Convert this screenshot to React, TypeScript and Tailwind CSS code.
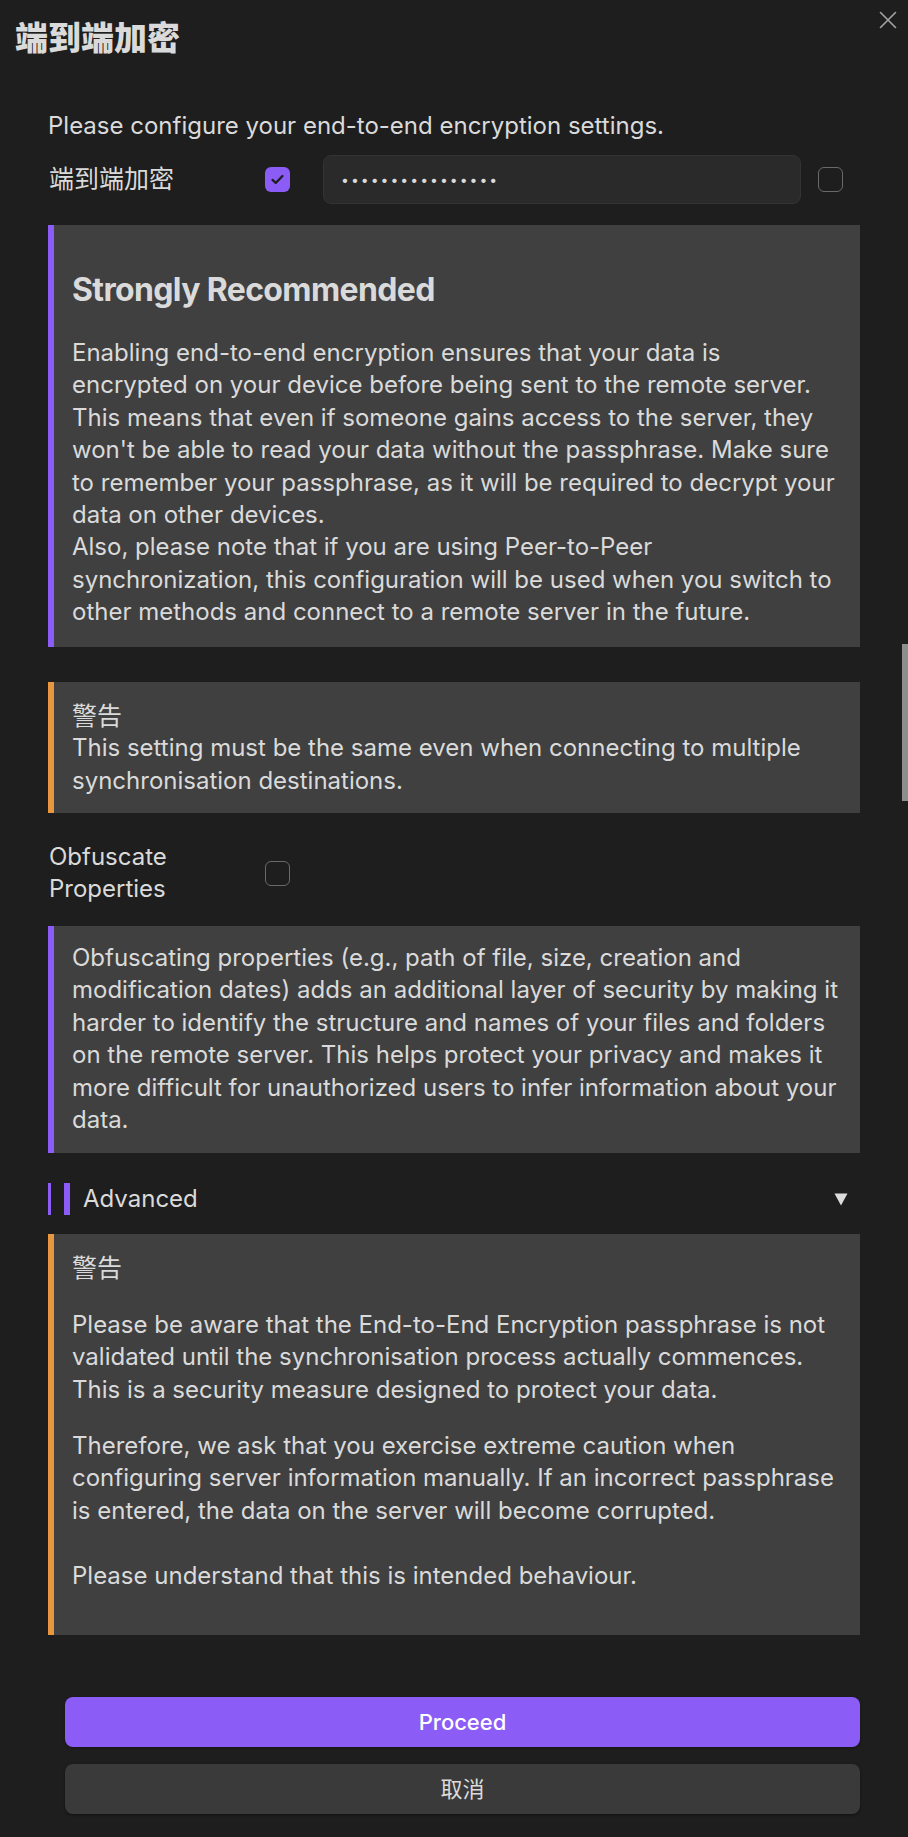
import React from "react";

const FONT = { fontFamily: 'Inter, "Noto Sans CJK SC", "Noto Sans", sans-serif' };

function Lines({ lines }: { lines: string[] }) {
  return (
    <>
      {lines.map((l, i) => (
        <span key={i} className="block whitespace-nowrap">
          {l}
        </span>
      ))}
    </>
  );
}

function CheckOn() {
  return (
    <div className="w-[25px] h-[25px] shrink-0 rounded-[6px] bg-[#8b5cf6] flex items-center justify-center">
      <svg width="17" height="17" viewBox="0 0 24 24" fill="none" stroke="#1e1e1e" strokeWidth="3.2" strokeLinecap="round" strokeLinejoin="round">
        <path d="M5 12.5l4.5 4.5L19 7" />
      </svg>
    </div>
  );
}

function CheckOff() {
  return <div className="w-[25px] h-[25px] shrink-0 rounded-[6px] border-[1.5px] border-[#6a6a6a]" />;
}

export default function App() {
  const box1 = [
    "Enabling end-to-end encryption ensures that your data is",
    "encrypted on your device before being sent to the remote server.",
    "This means that even if someone gains access to the server, they",
    "won't be able to read your data without the passphrase. Make sure",
    "to remember your passphrase, as it will be required to decrypt your",
    "data on other devices.",
    "Also, please note that if you are using Peer-to-Peer",
    "synchronization, this configuration will be used when you switch to",
    "other methods and connect to a remote server in the future.",
  ];
  const box3 = [
    "Obfuscating properties (e.g., path of file, size, creation and",
    "modification dates) adds an additional layer of security by making it",
    "harder to identify the structure and names of your files and folders",
    "on the remote server. This helps protect your privacy and makes it",
    "more difficult for unauthorized users to infer information about your",
    "data.",
  ];
  return (
    <div className="relative w-full h-[1837px] overflow-hidden bg-[#1e1e1e] text-[#dadada]" style={FONT}>
      {/* close */}
      <div className="absolute left-[879px] top-[11px] w-[18px] h-[18px]">
        <svg width="18" height="18" viewBox="0 0 18 18" fill="none" stroke="#a3a3a3" strokeWidth="1.6" strokeLinecap="round">
          <path d="M1.5 1.5l15 15M16.5 1.5l-15 15" />
        </svg>
      </div>
      {/* scrollbar */}
      <div className="absolute left-[902px] top-[644px] w-[6px] h-[157px] bg-[#8e8e8e]" />

      <h1 className="pl-[15px] pt-[19px] text-[33px] font-black leading-[38px]">端到端加密</h1>

      <div className="ml-[48px] w-[812px]">
        <div className="mt-[53px] text-[24px] leading-[32.4px]">Please configure your end-to-end encryption settings.</div>

        <div className="mt-[12.6px] h-[49px] flex items-center">
          <div className="w-[217px] shrink-0 text-[25px] leading-[32.4px] pl-[1px]">端到端加密</div>
          <CheckOn />
          <div className="ml-[33px] w-[478px] h-[49px] rounded-[8px] bg-[#2a2a2a] border border-[#333333] flex items-center pl-[16px]">
            {Array.from({ length: 16 }).map((_, i) => (
              <span key={i} className="w-[9.9px] text-center text-[14px] leading-none">•</span>
            ))}
          </div>
          <div className="ml-[17px]">
            <CheckOff />
          </div>
        </div>

        <div className="mt-[21px] bg-[#404040] border-l-[6px] border-[#8b5cf6] pl-[18px] pr-[8px] pt-[18px] pb-[18px]">
          <div className="mt-[28px] text-[32px] font-bold leading-[38.4px] tracking-[-0.02em]">Strongly Recommended</div>
          <div className="mt-[27.6px] text-[24px] leading-[32.4px]">
            <Lines lines={box1} />
          </div>
        </div>

        <div className="mt-[35.4px] bg-[#404040] border-l-[6px] border-[#e9973f] pl-[18px] pr-[8px] pt-[18px] pb-[16px] text-[24px] leading-[32.4px]">
          <span className="block text-[25px]">警告</span>
          <Lines lines={["This setting must be the same even when connecting to multiple", "synchronisation destinations."]} />
        </div>

        <div className="mt-[27.8px] flex items-center">
          <div className="w-[217px] shrink-0 text-[24px] leading-[32.4px] pl-[1px]">
            Obfuscate
            <br />
            Properties
          </div>
          <CheckOff />
        </div>

        <div className="mt-[20px] bg-[#404040] border-l-[6px] border-[#8b5cf6] pl-[18px] pr-[8px] pt-[16px] pb-[17px] text-[24px] leading-[32.4px]">
          <Lines lines={box3} />
        </div>

        <div className="mt-[30px] h-[32px] flex items-center">
          <div className="w-[3px] h-[32px] bg-[#8b5cf6]" />
          <div className="ml-[13px] w-[6px] h-[32px] bg-[#8b5cf6]" />
          <div className="ml-[13px] text-[24px] leading-[32.4px]">Advanced</div>
          <div className="ml-auto mr-[12px]">
            <svg width="14" height="13" viewBox="0 0 14 13">
              <path d="M0.5 0.5h13L7 12.5z" fill="#dcdcdc" />
            </svg>
          </div>
        </div>

        <div className="mt-[19px] bg-[#404040] border-l-[6px] border-[#e9973f] pl-[18px] pr-[8px] pt-[18px] pb-[43px] text-[24px] leading-[32.4px]">
          <span className="block text-[25px]">警告</span>
          <div className="mt-[24px]">
            <Lines
              lines={[
                "Please be aware that the End-to-End Encryption passphrase is not",
                "validated until the synchronisation process actually commences.",
                "This is a security measure designed to protect your data.",
              ]}
            />
          </div>
          <div className="mt-[24px]">
            <Lines
              lines={[
                "Therefore, we ask that you exercise extreme caution when",
                "configuring server information manually. If an incorrect passphrase",
                "is entered, the data on the server will become corrupted.",
              ]}
            />
            <span className="block h-[32.4px]" />
            <span className="block whitespace-nowrap">Please understand that this is intended behaviour.</span>
          </div>
        </div>
      </div>

      <div className="ml-[65px] w-[795px]">
        <button className="mt-[62.4px] w-full h-[50px] rounded-[8px] bg-[#8b5cf6] text-white text-[22px] font-medium flex items-center justify-center shadow-[0_1px_3px_rgba(0,0,0,0.35)]">
          Proceed
        </button>
        <button className="mt-[17px] w-full h-[50px] rounded-[8px] bg-[#3a3a3a] text-[#dadada] text-[22px] flex items-center justify-center shadow-[0_1px_3px_rgba(0,0,0,0.45)]">
          取消
        </button>
      </div>
    </div>
  );
}
